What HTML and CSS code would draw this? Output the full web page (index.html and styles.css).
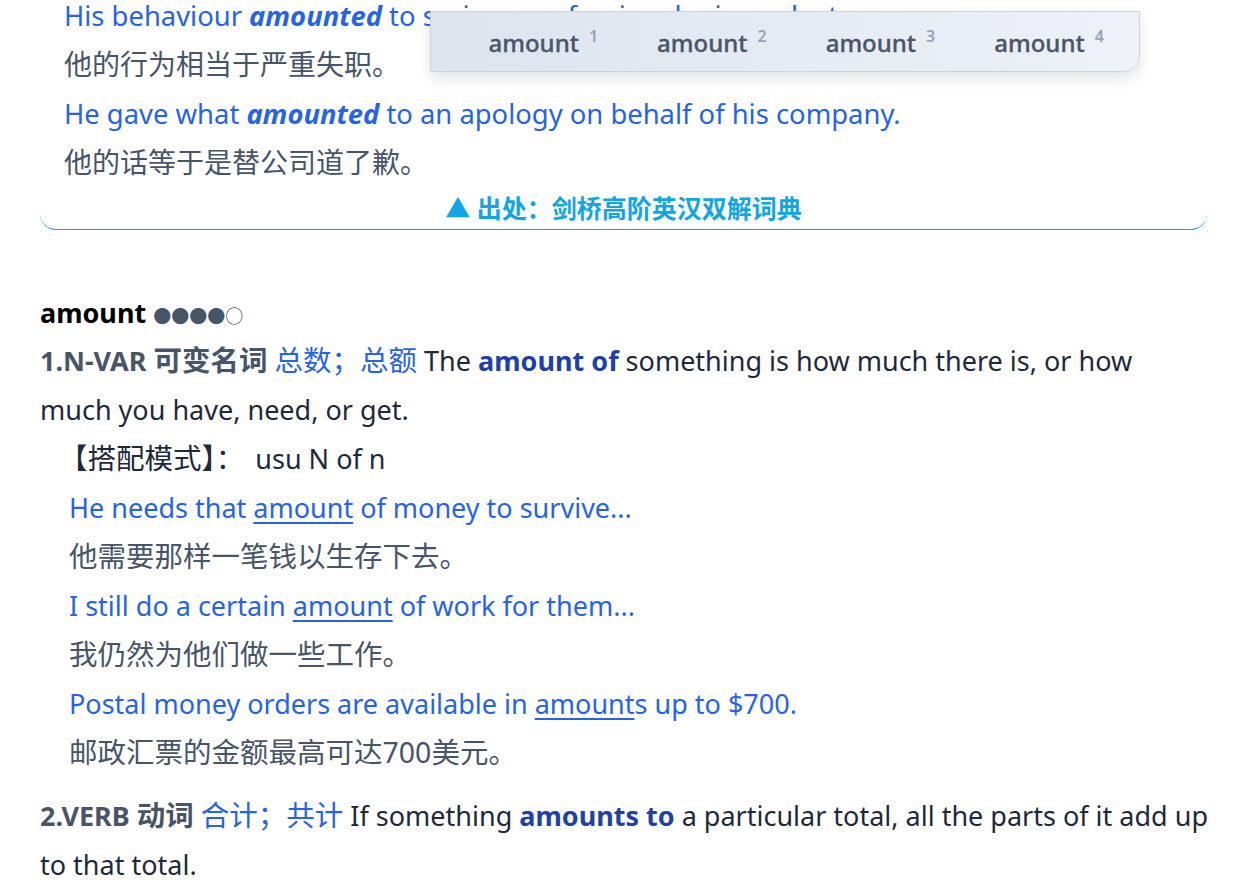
FILE: index.html
```html
<!DOCTYPE html>
<html lang="zh-CN">
<head>
<meta charset="utf-8">
<title>amount</title>
<link rel="stylesheet" href="styles.css">
</head>
<body>
<div class="page">
  <section class="source-card">
    <div class="ex-en">His behaviour <b><i>amounted</i></b> to serious professional misconduct.</div>
    <div class="ex-zh">他的行为相当于严重失职。</div>
    <div class="ex-en">He gave what <b><i>amounted</i></b> to an apology on behalf of his company.</div>
    <div class="ex-zh">他的话等于是替公司道了歉。</div>
    <div class="source">▲ 出处：剑桥高阶英汉双解词典</div>
  </section>

  <section class="entry">
    <div class="headword">amount <span class="stars">●●●●○</span></div>
    <div class="sense"><span class="pos">1.N-VAR <span class="cjk">可变名词</span></span> <span class="trans">总数；总额</span> The <b class="kw">amount of</b> something is how much there is, or how much you have, need, or get.</div>
    <div class="pattern"><span class="cjk label">【搭配模式】：</span> usu N of n</div>
    <div class="eg-en">He needs that <u>amount</u> of money to survive...</div>
    <div class="eg-zh">他需要那样一笔钱以生存下去。</div>
    <div class="eg-en">I still do a certain <u>amount</u> of work for them...</div>
    <div class="eg-zh">我仍然为他们做一些工作。</div>
    <div class="eg-en">Postal money orders are available in <u>amount</u>s up to $700.</div>
    <div class="eg-zh">邮政汇票的金额最高可达700美元。</div>
    <div class="sense sense-next"><span class="pos">2.VERB <span class="cjk">动词</span></span> <span class="trans">合计；共计</span> If something <b class="kw">amounts to</b> a particular total, all the parts of it add up to that total.</div>
  </section>

  <nav class="tabs">
    <span class="tab">amount<sup>1</sup></span>
    <span class="tab">amount<sup>2</sup></span>
    <span class="tab">amount<sup>3</sup></span>
    <span class="tab">amount<sup>4</sup></span>
  </nav>
</div>
</body>
</html>
```

FILE: styles.css
```css
html, body {
  margin: 0;
  padding: 0;
  background: #ffffff;
}

body {
  font-family: "Noto Sans", "Noto Sans CJK SC", sans-serif;
  font-size: 27px;
  line-height: 49px;
  color: #1e293b;
  overflow: hidden;
}

.page {
  position: relative;
  margin-top: -9px;
  padding: 0 47px 0 40px;
}

.source-card {
  border-bottom: 1px solid #1b9fd8;
  border-radius: 0 0 16px 16px;
  padding: 0 24px;
}

.ex-en {
  color: #2563eb;
  white-space: nowrap;
  font-size: 27.4px;
}

.ex-zh {
  color: #475569;
  font-size: 28px;
}

.source {
  text-align: center;
  color: #0ea5e9;
  font-weight: 700;
  font-size: 25px;
  line-height: 42px;
}

.entry {
  margin-top: 59px;
  margin-right: -3px;
}

.cjk {
  font-size: 28.5px;
  line-height: 1;
}

.headword {
  font-weight: 700;
  color: #000;
  line-height: 47px;
}

.stars {
  color: #475569;
  font-weight: 400;
  font-size: 18px;
  line-height: 1;
}

.pos {
  color: #475569;
  font-weight: 700;
}

.trans {
  color: #2563eb;
  font-size: 28.5px;
  line-height: 1;
}

.kw {
  color: #1e40af;
  font-weight: 700;
}

.pattern {
  padding-left: 19px;
  color: #1e293b;
}

.label {
  margin-right: 4px;
}

.eg-en {
  padding-left: 29px;
  color: #2563eb;
}

.eg-en u {
  text-decoration-thickness: 1.5px;
  text-underline-offset: 4px;
}

.eg-zh {
  padding-left: 29px;
  color: #475569;
  font-size: 28.5px;
}

.sense-next {
  margin-top: 14px;
}

.tabs {
  position: absolute;
  top: 20px;
  left: 430px;
  width: 710px;
  height: 61px;
  box-sizing: border-box;
  display: flex;
  align-items: center;
  padding-left: 28px;
  background: linear-gradient(90deg, #dde4ee, #eef2f7);
  border: 1px solid #c9d4e3;
  border-radius: 0 0 16px 0;
  box-shadow: 0 6px 14px rgba(15, 23, 42, 0.12);
}

.tab {
  padding: 0 29.5px;
  font-size: 24px;
  font-weight: 500;
  color: #4a5568;
  line-height: 1;
  -webkit-text-stroke: 0.3px #4a5568;
}

.tab sup {
  margin-left: 10px;
  font-size: 16px;
  color: #94a3b8;
  vertical-align: 10px;
  font-weight: 600;
  -webkit-text-stroke: 0;
}
```
